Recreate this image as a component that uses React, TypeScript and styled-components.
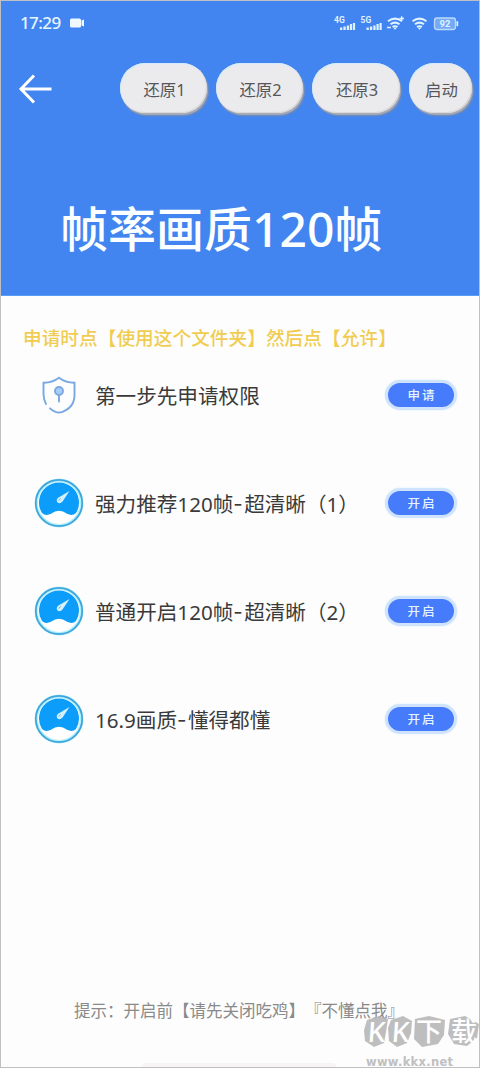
import React from "react";
import styled, { createGlobalStyle } from "styled-components";

const GlobalStyle = createGlobalStyle`
  * { box-sizing: border-box; }
  body { margin: 0; background: #fdfdfd; }
`;

const Screen = styled.div`
  position: relative;
  width: 480px;
  height: 1068px;
  overflow: hidden;
  display: flex;
  flex-direction: column;
  background: #fdfdfd;
  border: 1px solid #bfc0c4;
  font-family: "Noto Sans CJK SC", sans-serif;
  color: #3a3a3a;
  text-spacing-trim: space-all;
`;

const Header = styled.header`
  height: 295px;
  flex: none;
  display: flex;
  flex-direction: column;
  background: #4285f0;
  border-bottom: 1px solid #5b9df5;
`;

const StatusBar = styled.div`
  height: 44px;
  flex: none;
  display: flex;
  align-items: center;
  padding: 0 19px 0 19px;
  color: #e6f6ff;
`;

const Clock = styled.span`
  width: 50px;
  font: 500 17px/20px "Noto Sans", sans-serif;
  letter-spacing: -0.6px;
`;

const StatusIcons = styled.div`
  margin-left: auto;
  display: flex;
`;

const Toolbar = styled.nav`
  display: flex;
  align-items: center;
  height: 52px;
  margin-top: 17px;
  padding-left: 17px;
`;

const BackButton = styled.button`
  width: 36px;
  height: 36px;
  margin: 2px 66px 0 0;
  padding: 0;
  border: 0;
  background: none;
`;

const PillGroup = styled.div`
  display: flex;
  gap: 9px;
`;

const Pill = styled.button<{ $width: number }>`
  width: ${(p) => p.$width}px;
  height: 50px;
  padding: 4px 0 0 2px;
  border: 0;
  border-radius: 26px;
  background: #ebebee;
  color: #55565a;
  font: 400 16.4px/24px "Noto Sans", "Noto Sans CJK SC", sans-serif;
  white-space: nowrap;
  box-shadow: inset 1px 1px 1px #d2ebff, inset -1px -1px 1px #d9d9dc,
    1px 2px 1px #a9adb5, 2px 3px 2px #7188b4;
`;

const Title = styled.h1`
  margin: 79px 0 0 59px;
  font-family: "Noto Sans", "Noto Sans CJK SC", sans-serif;
  font-size: 48px;
  line-height: 72px;
  font-weight: 500;
  color: #fbffff;
  white-space: nowrap;
`;

const Hint = styled.p`
  margin: 27px 0 0 22px;
  font-size: 18.7px;
  line-height: 28px;
  font-weight: 500;
  color: #f0cd52;
  white-space: nowrap;
`;

const List = styled.main`
  display: flex;
  flex-direction: column;
  gap: 58px;
  margin-top: 19px;
`;

const Row = styled.section`
  height: 50px;
  display: flex;
  align-items: center;
  padding: 0 22px 0 33px;
`;

const Label = styled.span`
  margin-left: 11px;
  padding-top: 2px;
  font-family: "Noto Sans", "Noto Sans CJK SC", sans-serif;
  font-size: 20.6px;
  line-height: 30px;
  white-space: nowrap;
`;

const Dash = styled.span`
  position: relative;
  top: -1px;
  font-family: Inter, sans-serif;
  letter-spacing: 1.4px;
`;

const Action = styled.button`
  width: 72px;
  height: 30px;
  margin-left: auto;
  padding: 0 0 1px 2px;
  border: 3px solid #cfe3fd;
  border-radius: 15px;
  background: #467bfb;
  color: #e4f4ff;
  font: 500 12.5px/20px "Noto Sans CJK SC", serif;
  letter-spacing: 2px;
  box-shadow: 0 0 2px #d9eafd;
`;

const Footer = styled.footer`
  margin: auto 0 45px 73px;
  font-size: 16.5px;
  line-height: 24px;
  color: #8a8a8a;
  white-space: nowrap;
`;

const HomeIndicator = styled.div`
  position: absolute;
  left: 141px;
  bottom: 0;
  width: 194px;
  height: 4px;
  border-radius: 4px 4px 0 0;
  background: #f8f3f5;
`;

const Watermark = styled.div`
  position: absolute;
  left: 361px;
  top: 1000px;
  display: flex;
`;

const CameraIcon = () => (
  <svg width="15" height="12" viewBox="0 0 15 12" fill="#effaff">
    <rect x="0" y="1.5" width="11" height="9" rx="1.5" />
    <path d="M11.5 3.5L14 2.5V9.5L11.5 8.5Z" />
  </svg>
);

const statusFont = { fontFamily: "Roboto, sans-serif", fontWeight: 700 };

const SignalIcons = () => (
  <svg width="128" height="22" viewBox="0 0 128 22" fill="#dff2ff">
    <text x="2" y="11" fontSize="8.5" {...statusFont}>4G</text>
    <path d="M8 15.500h2.300v2.500h-2.300zM11.400 14.500h2.300v3.500h-2.300zM14.800 13.500h2.300v4.500h-2.300zM17.900 12h2.200v6h-2.200zM20.900 11h2.200v7h-2.200z" />
    <text x="28.500" y="11" fontSize="8.5" {...statusFont}>5G</text>
    <path d="M34.500 15.500h2.300v2.500h-2.300zM37.900 14.500h2.300v3.500h-2.300zM41.300 13.500h2.300v4.500h-2.300zM44.500 12h2.200v6h-2.200zM47.500 11h2.200v7h-2.200z" />
    <g fill="none" stroke="#dff2ff" strokeWidth="2">
      <path d="M56 9.300Q63 4 70 9.300M58.500 12.300Q63 8.900 67.500 12.300M60.500 14.900Q63 13.400 65.500 14.900" />
      <path d="M67.500 6.500H72M69.700 4.200V8.800M55 15.500H59" strokeWidth="1.400" />
      <path d="M80.500 9.300Q87.500 4 94.500 9.300M83 12.300Q87.500 8.900 92 12.300M85 14.900Q87.500 13.400 90 14.900" />
    </g>
    <path d="M61.200 15.700h3.600l-1.800 2zM85.700 15.700h3.600l-1.800 2z" />
    <rect x="102.500" y="6" width="21" height="11.500" rx="2.500" fill="#75a9f4" stroke="#b9dafd" strokeWidth="1.300" />
    <path d="M124.500 9.200h1.700v5h-1.700z" />
    <text x="113" y="15.200" fontSize="9.500" textAnchor="middle" {...statusFont}>92</text>
  </svg>
);

const BackIcon = () => (
  <svg width="36" height="36" viewBox="0 0 36 36" fill="none" stroke="#fff" strokeWidth="3">
    <path d="M16 4.500L3 18L16 31.500M3 18H33.500" />
  </svg>
);

const ShieldIcon = () => (
  <svg width="50" height="50" viewBox="0 0 50 50" fill="none" stroke="#78a9e2" strokeWidth="1.900" strokeLinecap="round">
    <path d="M12 34Q9.500 29.500 9.500 24V12.800Q18 13 25 7.800Q32 13 40.500 12.800V24Q41 37 28.500 41.800Q25 43.200 21.500 41.800Q18 40.300 16 38.300" />
    <circle cx="25" cy="21" r="4" fill="#a8cdf5" />
    <path d="M25 25.500V31.500" />
  </svg>
);

const GaugeIcon = () => (
  <svg width="50" height="50" viewBox="0 0 50 50">
    <circle cx="25" cy="25" r="22.700" fill="#fff" stroke="#b5effc" strokeWidth="3.500" />
    <circle cx="25" cy="25" r="23.200" fill="none" stroke="#3fa6dc" strokeWidth="1.800" />
    <path d="M8 35A20 20 0 1 1 42 35Q38.500 38.300 33 35.800Q25 29.500 17 35.800Q11.500 38.300 8 35Z" fill="#0c9cfa" />
    <path d="M35.500 13L28.500 23.500Q26 26.500 23.500 24.500Q21.500 22 24.500 19.500Z" fill="#d3f1fa" />
    <path d="M26.500 20.500L24.800 22.500" stroke="#58abd8" strokeWidth="1" />
  </svg>
);

const WatermarkArt = () => (
  <svg width="118" height="67" viewBox="0 -12 118 67">
    <g fill="#b7b7b8" fillOpacity="0.900">
      <path d="M5 7L17 3L26 6L24 19L22 30L12 34L3 28L2 17Z" />
      <path d="M29 7L41 3L50 8L49 20L45 30L35 34L27 28L26 15Z" />
      <path d="M53 6L67 3L83 7L82 22L76 31L60 34L52 26Z" />
      <path d="M88 6L103 3L117 11L115 25L105 33L92 31L86 21Z" />
    </g>
    <g fill="#fff">
      <g fontFamily='"Noto Sans", sans-serif' fontSize="28" fontWeight="500">
        <text transform="translate(5 29) skewX(-4)">K</text>
        <text transform="translate(29 29) skewX(-4)">K</text>
      </g>
      <g fontFamily='"Noto Sans CJK SC", sans-serif' fontSize="26" fontWeight="500">
        <text x="54" y="28">下</text>
        <text x="89" y="28">载</text>
      </g>
    </g>
    <text x="4" y="52.500" fontFamily='"DejaVu Sans", sans-serif' fontSize="11.500" fontWeight="700" fill="#c0c0c0" textLength="87">www.kkx.net</text>
  </svg>
);

const pills = [
  { text: "还原1", width: 87 },
  { text: "还原2", width: 87 },
  { text: "还原3", width: 88 },
  { text: "启动", width: 63 },
];

const rows = [
  { label: ["第一步先申请权限"], action: "申请", icon: <ShieldIcon /> },
  { label: ["强力推荐120帧", "超清晰（1）"], action: "开启", icon: <GaugeIcon /> },
  { label: ["普通开启120帧", "超清晰（2）"], action: "开启", icon: <GaugeIcon /> },
  { label: ["16.9画质", "懂得都懂"], action: "开启", icon: <GaugeIcon /> },
];

export default function App() {
  return (
    <Screen lang="zh-CN">
      <GlobalStyle />
      <Header>
        <StatusBar>
          <Clock>17:29</Clock>
          <CameraIcon />
          <StatusIcons><SignalIcons /></StatusIcons>
        </StatusBar>
        <Toolbar>
          <BackButton aria-label="返回"><BackIcon /></BackButton>
          <PillGroup>
            {pills.map((p) => <Pill key={p.text} $width={p.width}>{p.text}</Pill>)}
          </PillGroup>
        </Toolbar>
        <Title>帧率画质120帧</Title>
      </Header>
      <Hint>申请时点【使用这个文件夹】然后点【允许】</Hint>
      <List>
        {rows.map(({ label: [head, tail], action, icon }) => (
          <Row key={head}>
            {icon}
            <Label>{head}{tail && <><Dash>-</Dash>{tail}</>}</Label>
            <Action>{action}</Action>
          </Row>
        ))}
      </List>
      <Footer>提示：开启前【请先关闭吃鸡】『不懂点我』</Footer>
      <HomeIndicator />
      <Watermark><WatermarkArt /></Watermark>
    </Screen>
  );
}
